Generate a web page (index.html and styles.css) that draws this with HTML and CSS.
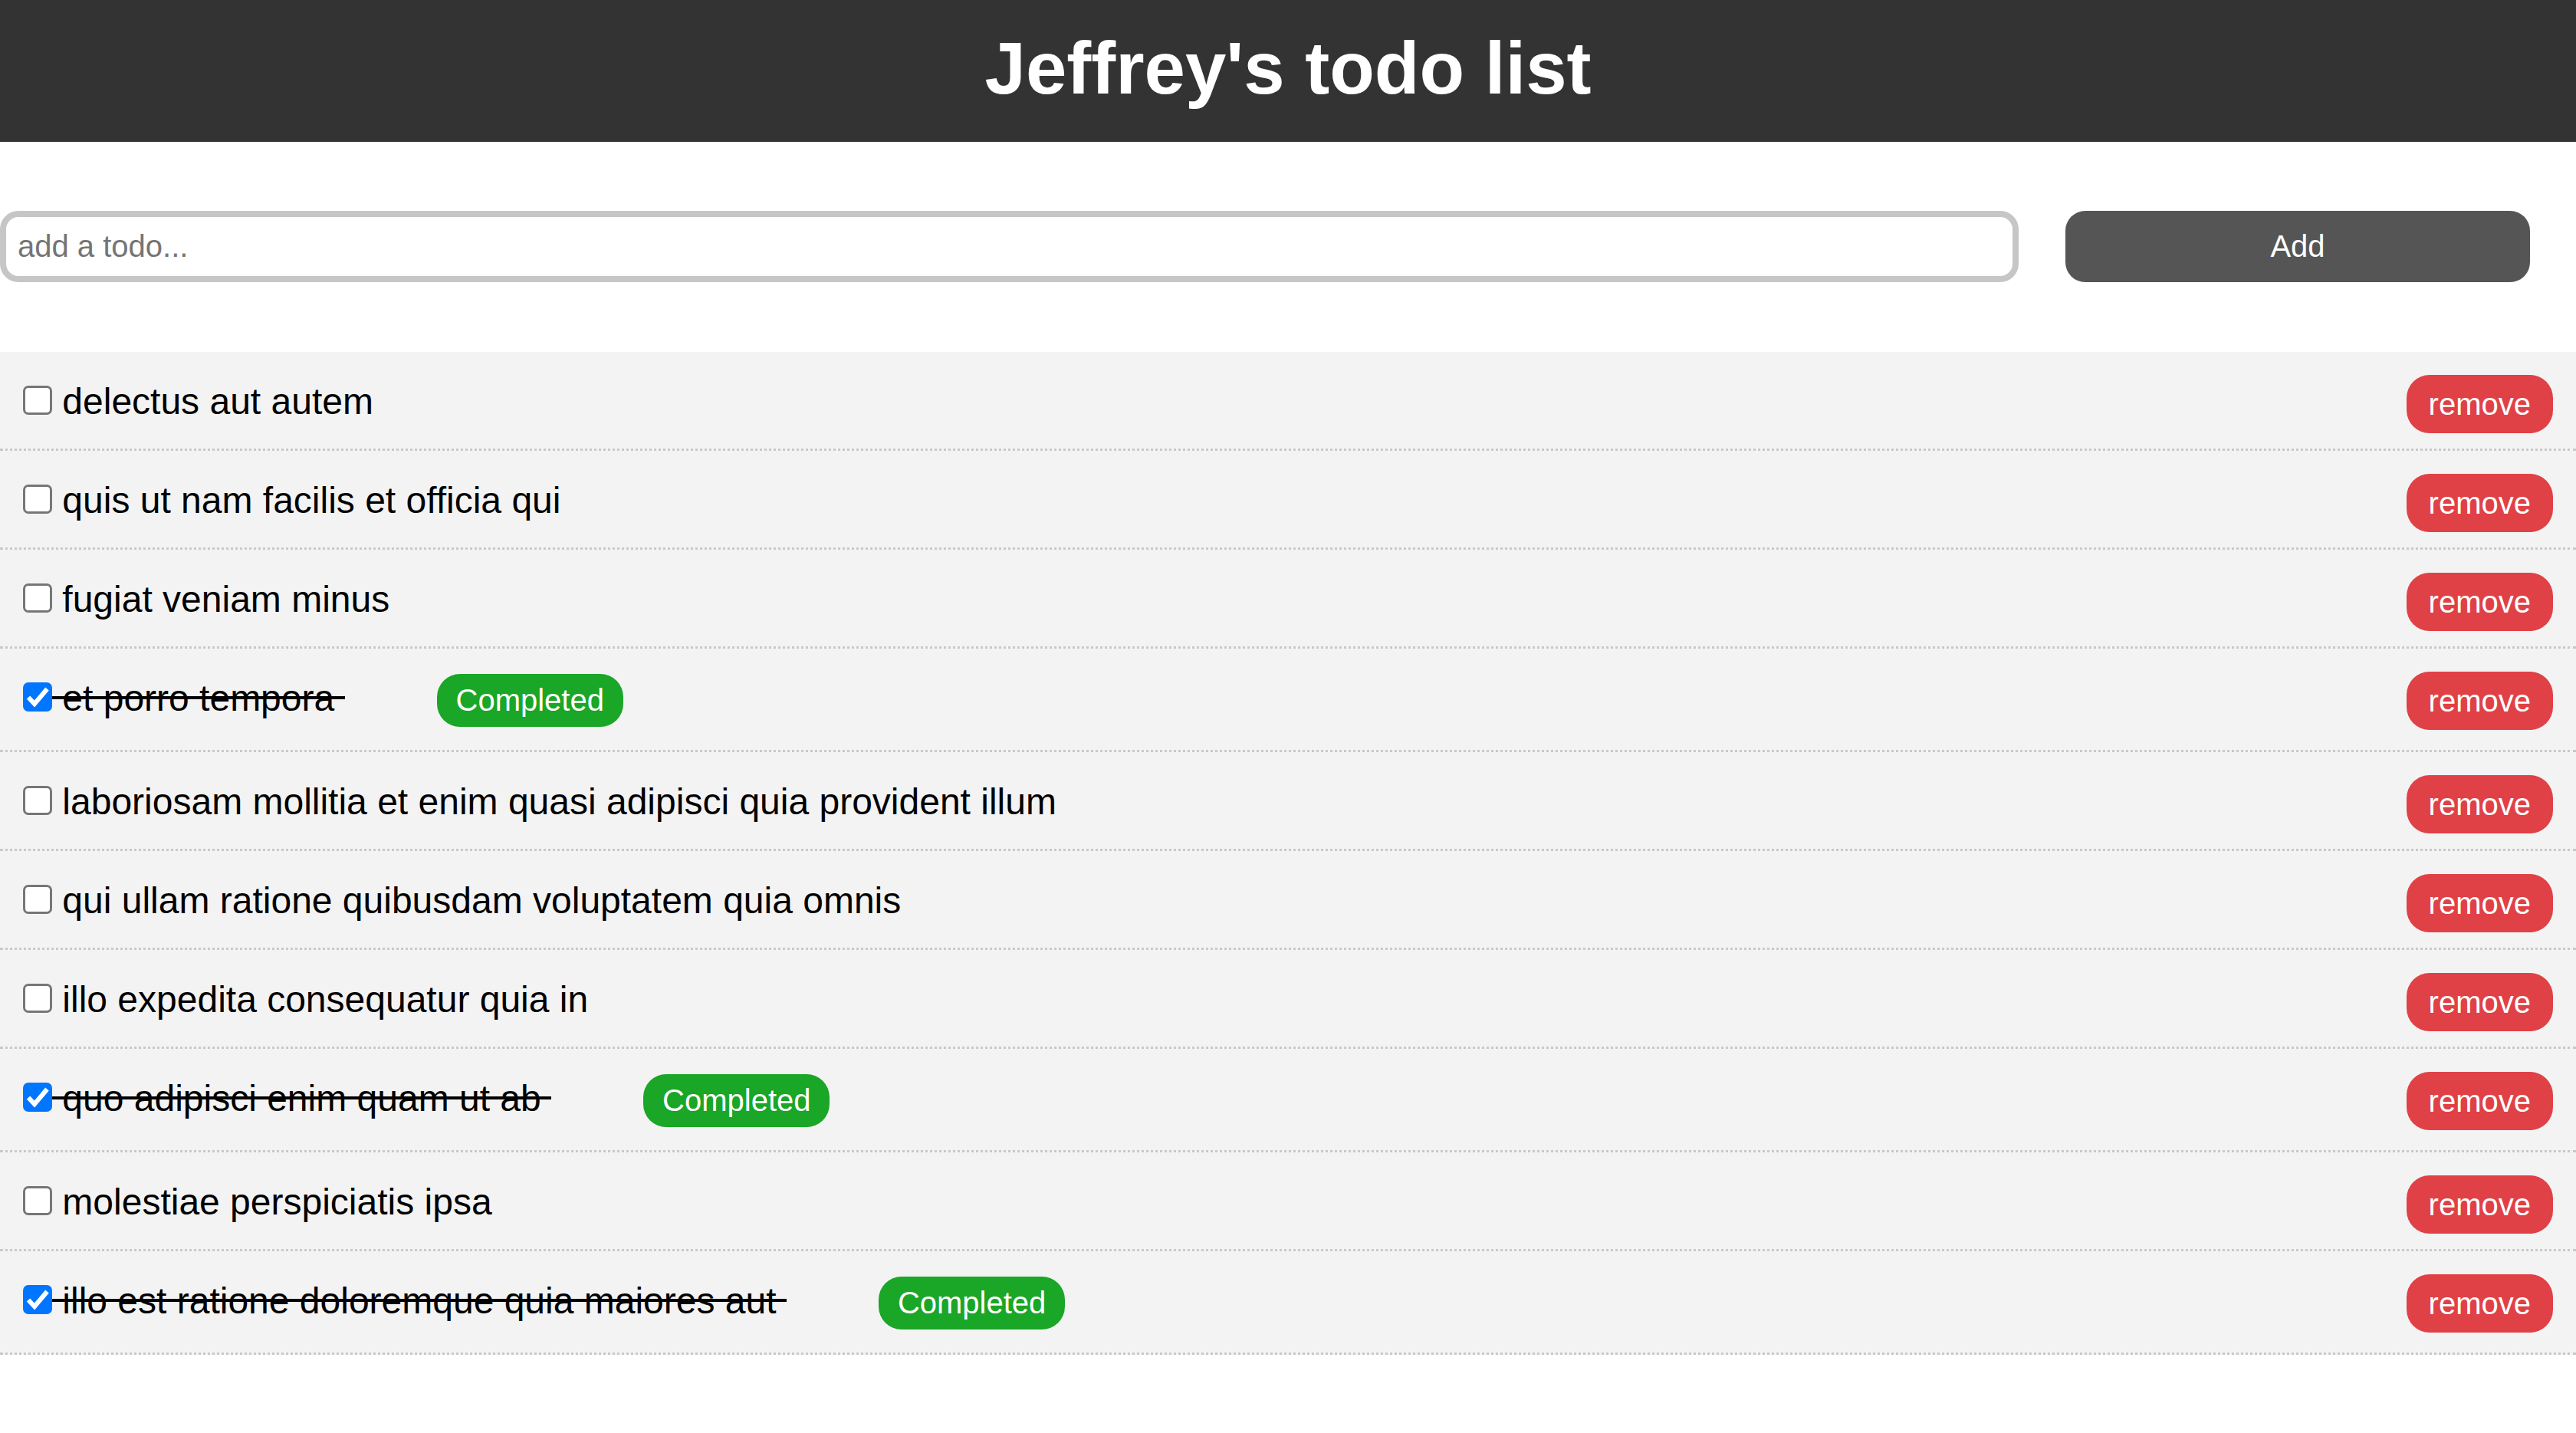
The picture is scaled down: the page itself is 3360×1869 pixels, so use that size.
FILE: index.html
```html
<!DOCTYPE html>
<html lang="en">
<head>
<meta charset="utf-8">
<title>Jeffrey's todo list</title>
<link rel="stylesheet" href="styles.css">
</head>
<body>
<header class="app-header"><h1 class="app-title">Jeffrey's todo list</h1></header>
<form class="add-form">
  <input class="add-input" type="text" placeholder="add a todo...">
  <button class="add-btn" type="button">Add</button>
</form>
<ul class="todo-list">
  <li class="todo"><div class="todo-main"><span class="box box-empty"></span><span class="todo-title"> delectus aut autem </span></div><button class="remove-btn" type="button">remove</button></li>
  <li class="todo"><div class="todo-main"><span class="box box-empty"></span><span class="todo-title"> quis ut nam facilis et officia qui </span></div><button class="remove-btn" type="button">remove</button></li>
  <li class="todo"><div class="todo-main"><span class="box box-empty"></span><span class="todo-title"> fugiat veniam minus </span></div><button class="remove-btn" type="button">remove</button></li>
  <li class="todo"><div class="todo-main"><span class="box box-checked"><svg class="check" viewBox="0 0 38 38"><path d="M7 19.5 L15 28 L31.5 8.5" fill="none" stroke="#fff" stroke-width="6"/></svg></span><span class="todo-title strike"> et porro tempora </span><span class="badge">Completed</span></div><button class="remove-btn" type="button">remove</button></li>
  <li class="todo"><div class="todo-main"><span class="box box-empty"></span><span class="todo-title"> laboriosam mollitia et enim quasi adipisci quia provident illum </span></div><button class="remove-btn" type="button">remove</button></li>
  <li class="todo"><div class="todo-main"><span class="box box-empty"></span><span class="todo-title"> qui ullam ratione quibusdam voluptatem quia omnis </span></div><button class="remove-btn" type="button">remove</button></li>
  <li class="todo"><div class="todo-main"><span class="box box-empty"></span><span class="todo-title"> illo expedita consequatur quia in </span></div><button class="remove-btn" type="button">remove</button></li>
  <li class="todo"><div class="todo-main"><span class="box box-checked"><svg class="check" viewBox="0 0 38 38"><path d="M7 19.5 L15 28 L31.5 8.5" fill="none" stroke="#fff" stroke-width="6"/></svg></span><span class="todo-title strike"> quo adipisci enim quam ut ab </span><span class="badge">Completed</span></div><button class="remove-btn" type="button">remove</button></li>
  <li class="todo"><div class="todo-main"><span class="box box-empty"></span><span class="todo-title"> molestiae perspiciatis ipsa </span></div><button class="remove-btn" type="button">remove</button></li>
  <li class="todo"><div class="todo-main"><span class="box box-checked"><svg class="check" viewBox="0 0 38 38"><path d="M7 19.5 L15 28 L31.5 8.5" fill="none" stroke="#fff" stroke-width="6"/></svg></span><span class="todo-title strike"> illo est ratione doloremque quia maiores aut </span><span class="badge">Completed</span></div><button class="remove-btn" type="button">remove</button></li>
</ul>
</body>
</html>
```
FILE: styles.css
```css
html, body {
  margin: 0;
  padding: 0;
  background: #fff;
  font-family: "Liberation Sans", Arial, sans-serif;
  color: #000;
}

.app-header {
  background: #333333;
  padding: 34px 0 41px;
}

.app-title {
  margin: 0;
  font-size: 96px;
  line-height: 110px;
  font-weight: bold;
  color: #fff;
  text-align: center;
}

.add-form {
  display: flex;
  gap: 61px;
  padding-right: 60px;
  margin: 90px 0 91px;
}

.add-input {
  flex: 1;
  min-width: 0;
  height: 93px;
  box-sizing: border-box;
  border: 8px solid #c6c6c6;
  border-radius: 24px;
  padding: 0 15px;
  margin: 0;
  font-family: "Liberation Sans", Arial, sans-serif;
  font-size: 40px;
  color: #000;
  background: #fff;
  outline: none;
}

.add-input::placeholder {
  color: #757575;
}

.add-btn {
  width: 606px;
  height: 93px;
  margin: 0;
  border: none;
  border-radius: 26px;
  background: #555555;
  color: #fff;
  font-family: "Liberation Sans", Arial, sans-serif;
  font-size: 40px;
}

.todo-list {
  list-style: none;
  margin: 0;
  padding: 0;
}

.todo {
  display: flex;
  justify-content: space-between;
  align-items: flex-start;
  padding: 30px 30px 20px;
  background: #f3f3f3;
  border-bottom: 3px dotted #c9c9c9;
}

.todo-main {
  font-size: 48px;
  line-height: normal;
  white-space: nowrap;
}

.box {
  display: inline-block;
  box-sizing: border-box;
  width: 38px;
  height: 38px;
  margin: 14px 0 -1px 0;
  border-radius: 7px;
  vertical-align: baseline;
}

.box-empty {
  background: #fff;
  border: 3px solid #767676;
}

.box-checked {
  background: #0075ff;
}

.check {
  display: block;
  width: 38px;
  height: 38px;
}

.strike {
  background-image: linear-gradient(#000, #000);
  background-repeat: no-repeat;
  background-size: 100% 4px;
  background-position: 0 24px;
}

.badge {
  display: inline-block;
  margin: 0 0 10px 120px;
  padding: 12px 25px;
  line-height: 45px;
  font-size: 40px;
  color: #fff;
  background: #1aa626;
  border-radius: 30px;
}

.remove-btn {
  flex: none;
  height: 76px;
  margin: 0;
  padding: 0 29px;
  border: none;
  border-radius: 30px;
  background: #e04146;
  color: #fff;
  font-family: "Liberation Sans", Arial, sans-serif;
  font-size: 40px;
}
```
